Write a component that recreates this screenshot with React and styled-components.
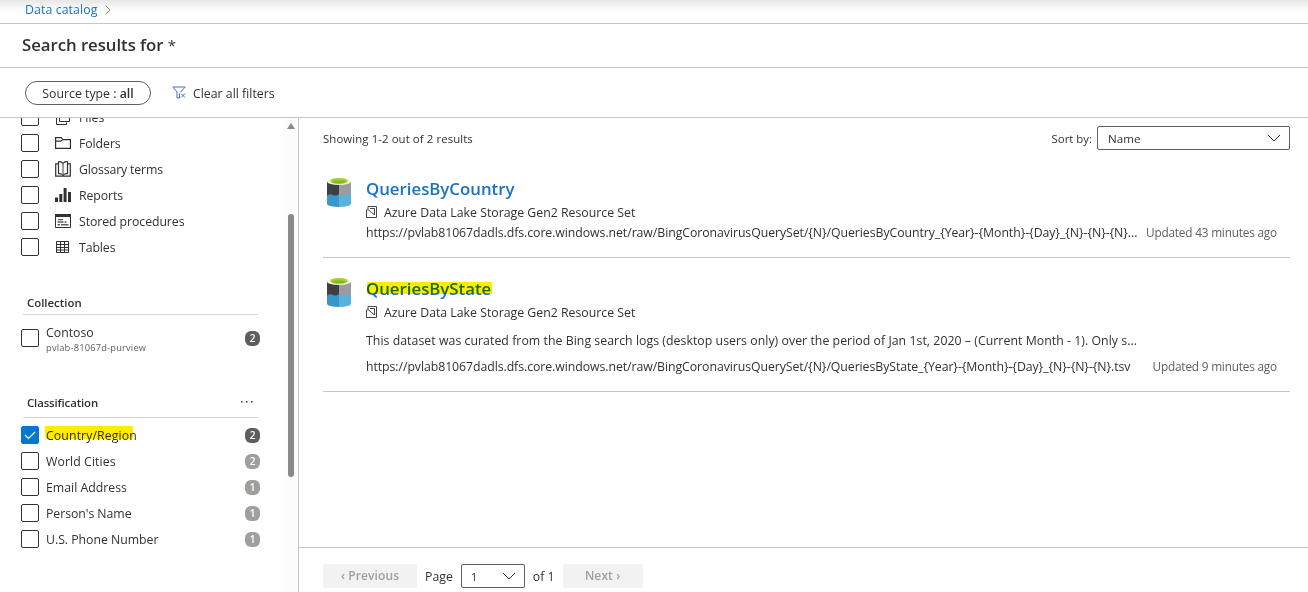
import React from "react";
import styled, { createGlobalStyle } from "styled-components";

const GlobalStyle = createGlobalStyle`
  *, *::before, *::after { box-sizing: border-box; }
  body {
    margin: 0;
    background: #fff;
    color: #323130;
    font-family: "Open Sans", "Noto Sans", sans-serif;
    font-size: 12.3px;
    line-height: 20px;
    overflow: hidden;
  }
`;

const Page = styled.div`
  display: flex;
  flex-direction: column;
  width: 1308px;
  height: 592px;
  overflow: hidden;
`;

const Text = styled.span`
  display: inline-block;
  padding-top: ${(p) => (p.$flat ? 0 : 2)}px;
  white-space: nowrap;
  letter-spacing: ${(p) => p.$track || 0}px;
`;

const Breadcrumb = styled.nav`
  display: flex;
  align-items: center;
  gap: 8px;
  flex: none;
  height: 24px;
  padding: 0 0 4px 25px;
  border-bottom: 1px solid #c8c6c4;
  background: linear-gradient(#e6e6e6, #f8f8f8 7px, #fff 14px);
  color: #1a72c4;
`;

const TitleBar = styled.header`
  display: flex;
  align-items: center;
  flex: none;
  height: 44px;
  padding: 0 22px 1px;
  border-bottom: 1px solid #c8c6c4;
`;

const PageTitle = styled.h1`
  margin: 0;
  font-size: 16.8px;
  font-weight: 600;
  line-height: 24px;
  letter-spacing: -0.05px;
  white-space: nowrap;
`;

const Asterisk = styled.span`
  font-size: 15px;
  font-weight: 400;
`;

const FilterBar = styled.div`
  display: flex;
  align-items: center;
  flex: none;
  gap: 21px;
  height: 50px;
  padding: 0 25px;
  border-bottom: 1px solid #c8c6c4;
`;

const FilterPill = styled.button`
  display: flex;
  align-items: center;
  justify-content: center;
  width: 126px;
  height: 24px;
  padding: 0;
  border: 1px solid #605e5c;
  border-radius: 12px;
  background: #fff;
  color: inherit;
  font: inherit;
  line-height: 20px;
  b { font-weight: 600; }
`;

const ClearFilters = styled.div`
  display: flex;
  align-items: center;
  gap: 7px;
`;

const Body = styled.div`
  display: flex;
  flex: 1;
  min-height: 0;
`;

const Sidebar = styled.aside`
  display: flex;
  flex: none;
  width: 299px;
  border-right: 1px solid #c8c6c4;
  overflow: hidden;
`;

const Facets = styled.div`
  flex: 1;
  margin-top: -14px;
  padding-left: 21px;
`;

const ScrollTrack = styled.div`
  display: flex;
  flex-direction: column;
  align-items: center;
  flex: none;
  width: 14px;
  background: #fcfcfc;
`;

const ScrollArrow = styled.div`
  margin-top: 5px;
  border: 4px solid transparent;
  border-top-width: 0;
  border-bottom: 6px solid #8a8a8a;
`;

const ScrollThumb = styled.div`
  width: 6px;
  height: 263px;
  margin-top: 85px;
  border-radius: 3px;
  background: #8a8a8a;
`;

const Row = styled.label`
  display: flex;
  align-items: center;
  height: ${(p) => p.$height || 26}px;
  padding-right: 24px;
`;

const Box = styled.span`
  display: flex;
  flex: none;
  align-items: center;
  justify-content: center;
  width: 18px;
  height: 18px;
  border: 1px solid ${(p) => (p.$checked ? "#0078d4" : "#323130")};
  border-radius: 2px;
  background: ${(p) => (p.$checked ? "#0078d4" : "#fff")};
`;

const TypeIcon = styled.span`
  display: flex;
  margin: 0 8px 0 16px;
`;

const RowLabel = styled.span`
  position: relative;
  display: flex;
  flex-direction: column;
  margin-left: 7px;
`;

const SubLabel = styled.small`
  font-size: 9.3px;
  line-height: 10px;
  color: #605e5c;
  white-space: nowrap;
  letter-spacing: 0.19px;
`;

const Count = styled.span`
  width: 15px;
  height: 15px;
  margin-left: auto;
  border-radius: 6px;
  background: ${(p) => (p.$dim ? "#a19f9d" : "#605e5c")};
  color: #fff;
  font-size: 10px;
  font-weight: 600;
  line-height: 15px;
  text-align: center;
`;

const GroupHead = styled.div`
  display: flex;
  align-items: center;
  justify-content: space-between;
  width: 235px;
  height: ${(p) => p.$height}px;
  margin: ${(p) => p.$top}px 0 ${(p) => p.$bottom}px 2px;
  padding: 0 4px;
  border-bottom: 1px solid #d6d4d2;
  font-size: 11.4px;
  font-weight: 600;
`;

const Main = styled.main`
  display: flex;
  flex-direction: column;
  flex: 1;
  min-width: 0;
`;

const Results = styled.section`
  flex: 1;
  padding: 8px 18px 0 24px;
`;

const ResultsHead = styled.div`
  display: flex;
  align-items: center;
  height: 24px;
  margin-bottom: 8px;
  font-size: 11.4px;
`;

const SortLabel = styled.div`
  margin: 0 5px 0 auto;
`;

const Select = styled.div`
  display: flex;
  align-items: center;
  justify-content: space-between;
  width: ${(p) => p.$width}px;
  height: 24px;
  padding: 0 8px 0 ${(p) => p.$inset}px;
  border: 1px solid #605e5c;
  border-radius: 2px;
  font-size: 11.6px;
  line-height: 20px;
`;

const Card = styled.article`
  display: flex;
  padding: 19px 13px 15px 4px;
  border-bottom: 1px solid #c8c6c4;
`;

const CardIcon = styled.div`
  flex: none;
  width: 39px;
`;

const CardBody = styled.div`
  flex: 1;
  min-width: 0;
`;

const CardTitle = styled.h2`
  position: relative;
  width: max-content;
  margin: 0 0 1px;
  color: #1a72c4;
  font-size: 16.8px;
  font-weight: 600;
  line-height: 24px;
`;

const CardLine = styled.div`
  display: flex;
  align-items: center;
  gap: 6px;
  height: 20px;
  margin-top: ${(p) => p.$top || 0}px;
`;

const Updated = styled.span`
  margin-left: auto;
  color: #605e5c;
  font-size: 11.8px;
  white-space: nowrap;
  letter-spacing: -0.19px;
`;

const Marker = styled.i`
  position: absolute;
  left: ${(p) => p.$left}px;
  top: ${(p) => p.$top}px;
  width: ${(p) => p.$width}px;
  height: ${(p) => p.$height}px;
  border-radius: 1px;
  background: #ffec00;
  mix-blend-mode: multiply;
`;

const Pager = styled.footer`
  display: flex;
  align-items: flex-start;
  flex: none;
  gap: 8px;
  height: 45px;
  padding: 16px 24px 0;
  border-top: 1px solid #c8c6c4;
  line-height: 24px;
`;

const PageLabel = styled.span`
  padding-top: 1px;
  white-space: nowrap;
`;

const PageButton = styled.button`
  width: ${(p) => p.$width}px;
  height: 24px;
  padding: 0;
  border: 0;
  border-radius: 2px;
  background: #f3f2f1;
  color: #a19f9d;
  font: 600 12px/22px "Open Sans", "Noto Sans", sans-serif;
  letter-spacing: 0.1px;
`;

const stroke = { fill: "none", stroke: "#323130", strokeWidth: 1 };

const Chevron = () => (
  <svg width="14" height="8" viewBox="0 0 14 8" {...stroke}>
    <path d="M1 1l6 6 6-6" />
  </svg>
);

const icons = {
  files: (
    <path {...stroke} d="M4.5 1.5h10v11h-10zM1.5 4.5v11h10v-2M7 1.5v2" />
  ),
  folder: (
    <path {...stroke} strokeWidth="1.2" d="M.6 13.4V2.6h5.6l1.6 2h7.6v8.8zM.6 6.2h5.2l2-1.6" />
  ),
  glossary: (
    <>
      <path {...stroke} strokeWidth="1.2" d="M3.5 12.6V.8Q6.500.2 8 2.500 9.500.2 12.500.8V12.600Q9.500 12.300 8 14 6.500 12.300 3.500 12.600zM3 2.800H.7v12.300h14.600V2.800H13" />
      <path fill="none" stroke="#777" strokeWidth="1.4" d="M8 2.500v11.500" />
    </>
  ),
  reports: <path fill="#323130" d="M0 10.500h3V15H0zM4.300 7h3v8h-3zM8.600 1h3v14h-3zM13 5h3v10h-3z" />,
  procedures: (
    <>
      <path {...stroke} d="M.5 1.500h15v13H.5z" />
      <path fill="#323130" d="M0 1h16v3H0z" />
      <path fill="#605e5c" d="M3 6h5v1.300H3zM2.500 8.300h6v1.400h-6zM9.500 8.300h2v1.400h-2zM2.500 11h2.500v1.400H2.500zM6 11h7.500v1.400H6z" />
    </>
  ),
  table: (
    <path {...stroke} d="M1.500 2.500h12v11h-12zM1.500 5.500h12M1.500 8.500h12M1.500 11h12M5.500 2.500v11M9.500 2.500v11" />
  ),
};

const LakeIcon = () => (
  <svg width="25" height="31" viewBox="0 0 25 31">
    <path fill="#3f3f42" d="M0 4.500h12v15H0z" />
    <path fill="#9c9ca0" d="M12 4.500h12v15H12z" />
    <path fill="#3896c8" d="M0 18.500q3-2 6-.5 3 1.500 6-1v13Q1 29.600 0 27z" />
    <path fill="#57b3de" d="M12 17q3 3.500 6.500 1 2.500-1.800 5.500-.5V27q-1 2.600-12 3z" />
    <ellipse cx="12" cy="4.500" rx="12" ry="3.600" fill="#f1f3ec" />
    <ellipse cx="12" cy="3.900" rx="8.800" ry="2.900" fill="#a4cf2a" />
    <ellipse cx="12" cy="4.900" rx="6.500" ry="1.500" fill="#86b81c" />
  </svg>
);

const ResourceIcon = () => (
  <svg width="12" height="12" viewBox="0 0 12 12" fill="none" stroke="#484644">
    <path d="M2 .5h8.500v11H.5V4.500M2 .5v3M.5 11.500V4L2 3.500l6 5M4 2.500h4.500V9" />
  </svg>
);

const types = [
  ["files", "Files", 0],
  ["folder", "Folders", -0.08],
  ["glossary", "Glossary terms", -0.14],
  ["reports", "Reports", -0.1],
  ["procedures", "Stored procedures", -0.08],
  ["table", "Tables", -0.1],
];

const classes = [
  ["World Cities", 2, 0.08],
  ["Email Address", 1, 0],
  ["Person's Name", 1, -0.06],
  ["U.S. Phone Number", 1, -0.03],
];

function SidebarPanel() {
  return (
    <Sidebar>
      <Facets>
        {types.map(([icon, label, track]) => (
          <Row key={label}>
            <Box />
            <TypeIcon>
              <svg width="16" height="16" viewBox="0 0 16 16">{icons[icon]}</svg>
            </TypeIcon>
            <Text $track={track}>{label}</Text>
          </Row>
        ))}
        <GroupHead $top={31} $height={24} $bottom={7}>
          <Text $flat>Collection</Text>
        </GroupHead>
        <Row $height={32}>
          <Box />
          <RowLabel>
            <Text $flat>Contoso</Text>
            <SubLabel>pvlab-81067d-purview</SubLabel>
          </RowLabel>
          <Count>2</Count>
        </Row>
        <GroupHead $top={34} $height={30} $bottom={4}>
          <Text $flat $track={-0.12}>Classification</Text>
          <svg width="14" height="4" viewBox="0 0 14 4" fill="#323130">
            <path d="M1 0h1.500v1.500H1zM6 0h1.500v1.500H6zM11 0h1.500v1.500H11z" />
          </svg>
        </GroupHead>
        <Row>
          <Box $checked>
            <svg width="14" height="12" viewBox="0 0 14 12" fill="none" stroke="#fff" strokeWidth="1.2">
              <path d="M2 6l3.500 3.500L12 3" />
            </svg>
          </Box>
          <RowLabel>
            <Text $track={0.1}>Country/Region</Text>
            <Marker $left={-1} $top={2} $width={88} $height={13} />
          </RowLabel>
          <Count>2</Count>
        </Row>
        {classes.map(([label, count, track]) => (
          <Row key={label}>
            <Box />
            <RowLabel><Text $track={track}>{label}</Text></RowLabel>
            <Count $dim>{count}</Count>
          </Row>
        ))}
      </Facets>
      <ScrollTrack>
        <ScrollArrow />
        <ScrollThumb />
      </ScrollTrack>
    </Sidebar>
  );
}

export default function App() {
  return (
    <Page>
      <GlobalStyle />
      <Breadcrumb>
        <Text $flat $track={0.1}>Data catalog</Text>
        <svg width="6" height="10" viewBox="0 0 6 10" fill="none" stroke="#8a8886">
          <path d="M.7.7L5 5 .7 9.300" />
        </svg>
      </Breadcrumb>
      <TitleBar><PageTitle>Search results for <Asterisk>*</Asterisk></PageTitle></TitleBar>
      <FilterBar>
        <FilterPill><Text>Source type : <b>all</b></Text></FilterPill>
        <ClearFilters>
          <svg width="14" height="13" viewBox="0 0 14 13" fill="none" stroke="#4f6bc0">
            <path d="M.8 1h12.400L8.500 6.200M.8 1L5 6v6h2.500V7.500M9 7.500l4 4M13 7.500l-4 4" />
          </svg>
          <Text>Clear all filters</Text>
        </ClearFilters>
      </FilterBar>
      <Body>
        <SidebarPanel />
        <Main>
          <Results>
            <ResultsHead>
              <Text $track={0.09}>Showing 1-2 out of 2 results</Text>
              <SortLabel><Text>Sort by:</Text></SortLabel>
              <Select $width={193} $inset={10}><Text>Name</Text><Chevron /></Select>
            </ResultsHead>
            <Card>
              <CardIcon><LakeIcon /></CardIcon>
              <CardBody>
                <CardTitle>QueriesByCountry</CardTitle>
                <CardLine>
                  <ResourceIcon />
                  <Text>Azure Data Lake Storage Gen2 Resource Set</Text>
                </CardLine>
                <CardLine>
                  <Text $track={-0.065}>{"https://pvlab81067dadls.dfs.core.windows.net/raw/BingCoronavirusQuerySet/{N}/QueriesByCountry_{Year}-{Month}-{Day}_{N}-{N}-{N}..."}</Text>
                  <Updated>Updated 43 minutes ago</Updated>
                </CardLine>
              </CardBody>
            </Card>
            <Card>
              <CardIcon><LakeIcon /></CardIcon>
              <CardBody>
                <CardTitle>
                  QueriesByState
                  <Marker $left={1} $top={5} $width={125} $height={12} />
                </CardTitle>
                <CardLine>
                  <ResourceIcon />
                  <Text>Azure Data Lake Storage Gen2 Resource Set</Text>
                </CardLine>
                <CardLine $top={8}>
                  <Text $track={0.042}>This dataset was curated from the Bing search logs (desktop users only) over the period of Jan 1st, 2020 – (Current Month - 1). Only s...</Text>
                </CardLine>
                <CardLine $top={6}>
                  <Text $track={-0.068}>{"https://pvlab81067dadls.dfs.core.windows.net/raw/BingCoronavirusQuerySet/{N}/QueriesByState_{Year}-{Month}-{Day}_{N}-{N}-{N}.tsv"}</Text>
                  <Updated>Updated 9 minutes ago</Updated>
                </CardLine>
              </CardBody>
            </Card>
          </Results>
          <Pager>
            <PageButton $width={94}>‹ Previous</PageButton>
            <PageLabel>Page</PageLabel>
            <Select $width={64} $inset={9}><Text>1</Text><Chevron /></Select>
            <PageLabel>of 1</PageLabel>
            <PageButton $width={80}>Next ›</PageButton>
          </Pager>
        </Main>
      </Body>
    </Page>
  );
}
